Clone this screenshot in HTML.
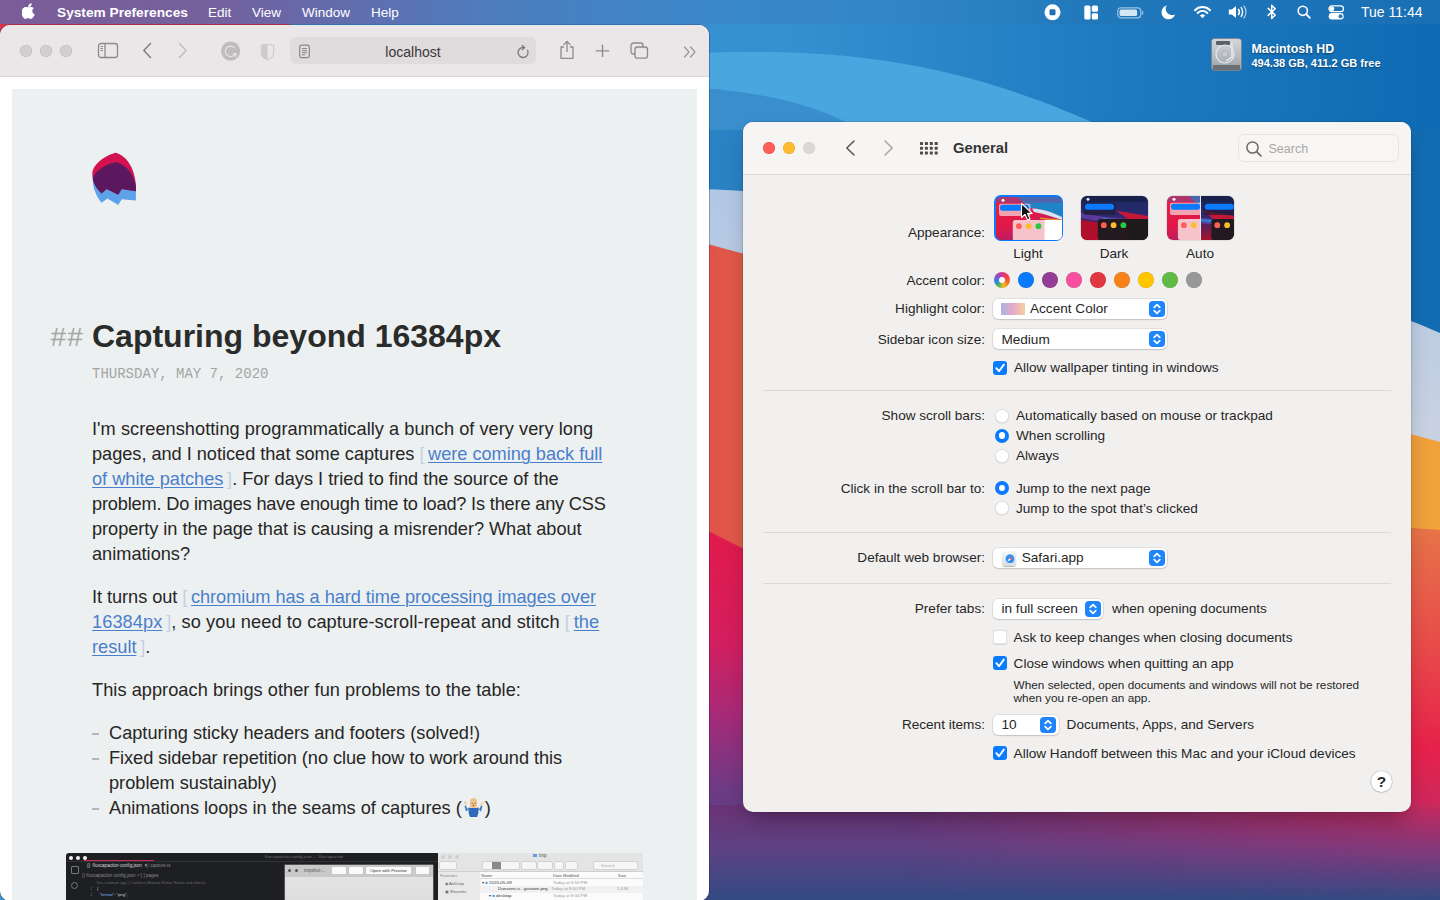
<!DOCTYPE html>
<html><head><meta charset="utf-8">
<style>
*{box-sizing:border-box;margin:0;padding:0}
html,body{width:1440px;height:900px;overflow:hidden;font-family:"Liberation Sans",sans-serif;}
body{position:relative;background:#2a82c4}
.abs{position:absolute}
#wall{position:absolute;left:0;top:0;width:1440px;height:900px}
/* menubar */
#menubar{position:absolute;left:0;top:0;width:1440px;height:24px;
 background:linear-gradient(90deg,#7b5d98 0%,#74619e 15%,#6868a8 21%,#4c7ebf 35%,#3a88c9 50%,#3186c7 62%,#2078bb 76%,#1a6fb5 100%);color:#fff}
#menubar .t{position:absolute;top:4.5px;font-size:13.5px;line-height:16px;white-space:nowrap}
/* safari */
#safari{position:absolute;left:0;top:25px;width:709px;height:876px;background:#fff;border-radius:10px;overflow:hidden;box-shadow:0 0 0 0.6px rgba(20,20,60,.45)}
#stb{position:absolute;left:0;top:0;width:709px;height:52px;background:#ebe6e8;border-bottom:1px solid #dcd7d9}
#page{position:absolute;left:12px;top:64px;width:685px;height:900px;background:#edf0f0}
.ptxt{position:absolute;left:92px;font-size:18.2px;line-height:25px;color:#262626;white-space:nowrap}
.lnk{color:#4a7fcc;text-decoration:underline;text-decoration-thickness:1.3px;text-underline-offset:1.6px}
.br{color:#c2d2e6}
/* prefs */
#prefs{position:absolute;left:743px;top:122px;width:668px;height:690px;background:#f2f0ef;border-radius:10px;
 box-shadow:0 0 0 0.5px rgba(0,0,0,.2),0 12px 22px -6px rgba(0,0,0,.3)}
#ptb{position:absolute;left:0;top:0;width:668px;height:53px;border-bottom:1px solid #dddbda;background:#f7f5f4;border-radius:10px 10px 0 0}
.lbl{position:absolute;font-size:13.6px;line-height:16px;color:#262626;white-space:nowrap;margin-top:1px}
.rl{text-align:right;width:300px;left:-57px}
.sep{position:absolute;left:20px;width:628px;height:1px;background:#dcdad9}
.chk{position:absolute;left:250px;width:14px;height:14px;border-radius:3px;background:#0a7aff}
.unchk{position:absolute;left:250px;width:14px;height:14px;border-radius:3px;background:#fff;box-shadow:inset 0 0 0 0.5px #c8c6c5,0 0.5px 1px rgba(0,0,0,.1)}
.radio{position:absolute;left:252px;width:14px;height:14px;border-radius:7px;background:#fff;box-shadow:inset 0 0 0 0.5px #c8c6c5,0 0.5px 1px rgba(0,0,0,.1)}
.radio.on{background:#0a7aff;box-shadow:none}
.radio.on::after{content:"";position:absolute;left:3.8px;top:3.8px;width:6.4px;height:6.4px;border-radius:3.2px;background:#fff}
.pop{position:absolute;left:250px;height:20px;border-radius:5px;background:#fff;box-shadow:0 0 0 0.5px rgba(0,0,0,.14),0 1px 1.5px rgba(0,0,0,.12)}
.step{position:absolute;top:2px;width:16px;height:16px;border-radius:4px;background:#1f85fb}
.acc{position:absolute;top:150px;width:16px;height:16px;border-radius:8px}
</style></head>
<body>
<div id="wall"><svg width="1440" height="900" viewBox="0 0 1440 900">
<defs>
<linearGradient id="wtop" x1="0" y1="0" x2="1" y2="0">
 <stop offset="0" stop-color="#3a94d0"/><stop offset="0.55" stop-color="#3490d0"/><stop offset="0.78" stop-color="#1e7ac0"/><stop offset="1" stop-color="#0e6ab2"/>
</linearGradient>
<linearGradient id="lav" x1="0" y1="0" x2="0" y2="1">
 <stop offset="0" stop-color="#b2c7e4"/><stop offset="0.5" stop-color="#d2d6e0"/><stop offset="1" stop-color="#dcdde6"/>
</linearGradient>
<linearGradient id="orgL" x1="0" y1="0" x2="1" y2="0">
 <stop offset="0" stop-color="#e05248"/><stop offset="0.1" stop-color="#e0604a"/><stop offset="1" stop-color="#f0a23a"/>
</linearGradient>
<linearGradient id="redR" x1="0" y1="0" x2="0" y2="1">
 <stop offset="0" stop-color="#e67648"/><stop offset="0.35" stop-color="#e8484a"/><stop offset="0.6" stop-color="#e6224a"/><stop offset="0.82" stop-color="#c02a66"/><stop offset="1" stop-color="#3d4a88"/>
</linearGradient>
<linearGradient id="redL" x1="0" y1="0" x2="0" y2="1">
 <stop offset="0" stop-color="#e21a4a"/><stop offset="0.3" stop-color="#d41e5e"/><stop offset="0.5" stop-color="#a82a78"/><stop offset="0.7" stop-color="#6e3a84"/><stop offset="1" stop-color="#384a84"/>
</linearGradient>
<linearGradient id="bot" x1="0" y1="0" x2="0" y2="1">
 <stop offset="0" stop-color="#6a3274"/><stop offset="0.45" stop-color="#5e4284"/><stop offset="1" stop-color="#334a82"/>
</linearGradient>
<radialGradient id="pinkglow" cx="1440" cy="805" r="200" gradientUnits="userSpaceOnUse">
 <stop offset="0" stop-color="#d82a58" stop-opacity="1"/><stop offset="0.5" stop-color="#b83068" stop-opacity="0.6"/><stop offset="1" stop-color="#8a3a78" stop-opacity="0"/>
</radialGradient>
</defs>
<rect width="1440" height="900" fill="url(#wtop)"/>
<path d="M700 53 C 850 48, 960 62, 1110 130 L 700 130 Z" fill="#4aa6de"/>
<path d="M700 88 C 760 92, 820 105, 860 130 L 700 130 Z" fill="#3a8ecc"/>
<path d="M700 130 L 1440 130 L 1440 900 L 700 900 Z" fill="#136cb2"/>
<path d="M700 130 L 760 130 L 760 200 L 700 200 Z" fill="#2a82c4"/>
<path d="M700 189 C 900 194, 1300 268, 1440 333 L 1440 900 L 700 900 Z" fill="url(#lav)"/>
<path d="M700 242 L 1440 442 L 1440 900 L 700 900 Z" fill="url(#orgL)"/>
<path d="M1300 520 L 1440 530 L 1440 900 L 1300 900 Z" fill="url(#redR)"/>
<path d="M700 527 L 760 557 L 760 900 L 700 900 Z" fill="url(#redL)"/>
<rect x="700" y="805" width="740" height="95" fill="url(#bot)"/>
<defs><linearGradient id="pv" x1="0" y1="0" x2="0" y2="1"><stop offset="0" stop-color="#c82a5c" stop-opacity="1"/><stop offset="0.5" stop-color="#a03272" stop-opacity="0.55"/><stop offset="1" stop-color="#7a3a7a" stop-opacity="0"/></linearGradient>
<linearGradient id="ph" x1="0" y1="0" x2="1" y2="0"><stop offset="0" stop-color="#fff" stop-opacity="0"/><stop offset="0.45" stop-color="#fff" stop-opacity="0.45"/><stop offset="1" stop-color="#fff" stop-opacity="1"/></linearGradient>
<mask id="pm" maskUnits="userSpaceOnUse" x="900" y="805" width="540" height="95"><rect x="900" y="805" width="540" height="95" fill="url(#ph)"/></mask></defs>
<rect x="900" y="805" width="540" height="95" fill="url(#pv)" mask="url(#pm)"/>
<rect x="0" y="0" width="290" height="40" fill="#d8344e"/>
<rect x="290" y="0" width="420" height="40" fill="#3a8ed0"/>
</svg></div>
<div id="menubar">
 <div class="t" style="left:57px;font-weight:bold;font-size:13.7px">System Preferences</div>
 <div class="t" style="left:208px">Edit</div>
 <div class="t" style="left:252px">View</div>
 <div class="t" style="left:302px">Window</div>
 <div class="t" style="left:371px">Help</div>
 <div class="t" style="left:1361px;font-size:14px;top:3.8px">Tue 11:44</div>
<svg class="abs" style="left:22.2px;top:3px" width="14" height="16" viewBox="0 0 15 17"><path d="M10.3 0.3 C10.4 1.5 9.9 2.6 9.2 3.4 C8.5 4.2 7.4 4.8 6.4 4.7 C6.3 3.6 6.8 2.5 7.5 1.7 C8.2 0.9 9.4 0.3 10.3 0.3 Z M13.7 12.2 C13.3 13.1 13.1 13.5 12.5 14.4 C11.7 15.6 10.7 17 9.4 17 C8.3 17 8 16.3 6.5 16.3 C5 16.3 4.7 17 3.5 17 C2.3 17 1.3 15.7 0.6 14.5 C-1.4 11.4 -0.6 7.2 1.1 5.6 C2 4.6 3.2 4.2 4.3 4.2 C5.4 4.2 6.1 4.8 7.1 4.8 C8 4.8 8.6 4.2 9.9 4.2 C10.9 4.2 11.9 4.7 12.7 5.6 C10.2 7 10.6 10.7 13.7 12.2 Z" fill="#fff"/></svg>
 <svg class="abs" style="left:1044px;top:4px" width="18" height="17" viewBox="0 0 18 17"><circle cx="8.5" cy="8.3" r="8" fill="#fff"/><rect x="5.5" y="5.3" width="6" height="6" rx="1.3" fill="#2070b4"/></svg>
 <svg class="abs" style="left:1084px;top:5px" width="15" height="15" viewBox="0 0 15 15"><rect x="0.3" y="0.5" width="6.2" height="14" rx="1.5" fill="#fff"/><rect x="7.8" y="0.5" width="6.2" height="6.2" rx="1.5" fill="#fff"/><rect x="7.8" y="8.2" width="6.2" height="6.2" rx="1.5" fill="#fff"/></svg>
 <svg class="abs" style="left:1117px;top:7px" width="28" height="12" viewBox="0 0 28 12"><rect x="0.8" y="0.8" width="23" height="10" rx="3" fill="none" stroke="rgba(255,255,255,.55)" stroke-width="1.2"/><rect x="2.6" y="2.6" width="17.5" height="6.5" rx="1.6" fill="rgba(255,255,255,.82)"/><path d="M25 4 L26.3 4.6 L26.3 7.2 L25 7.8 Z" fill="rgba(255,255,255,.55)"/></svg>
 <svg class="abs" style="left:1161px;top:5px" width="15" height="15" viewBox="0 0 15 15"><path d="M6.2 0.6 C3 1.2 0.6 4 0.6 7.4 C0.6 11.2 3.7 14.3 7.5 14.3 C10.6 14.3 13.2 12.3 14.1 9.5 C13.2 9.9 12.3 10.1 11.3 10.1 C7.6 10.1 4.7 7.1 4.7 3.5 C4.7 2.4 5.1 1.4 6.2 0.6 Z" fill="#fff"/></svg>
 <svg class="abs" style="left:1194px;top:5px" width="17" height="14" viewBox="0 0 17 14"><path d="M1 5.2 C5 1 12 1 16 5.2" fill="none" stroke="#fff" stroke-width="2" stroke-linecap="round"/><path d="M3.6 8 C6.5 5.2 10.5 5.2 13.4 8" fill="none" stroke="#fff" stroke-width="2" stroke-linecap="round"/><path d="M6.4 10.6 C7.6 9.4 9.4 9.4 10.6 10.6 L8.5 12.8 Z" fill="#fff" stroke="#fff" stroke-width="1" stroke-linejoin="round"/></svg>
 <svg class="abs" style="left:1228px;top:5px" width="20" height="14" viewBox="0 0 20 14"><path d="M0.8 4.5 L3.8 4.5 L8 1 L8 13 L3.8 9.5 L0.8 9.5 Z" fill="#fff"/><path d="M10.5 4.3 C11.5 5.8 11.5 8.2 10.5 9.7" fill="none" stroke="#fff" stroke-width="1.5" stroke-linecap="round"/><path d="M13.2 2.6 C15 5 15 9 13.2 11.4" fill="none" stroke="#fff" stroke-width="1.4" stroke-linecap="round"/><path d="M15.9 1 C18.6 4.5 18.6 9.5 15.9 13" fill="none" stroke="rgba(255,255,255,.6)" stroke-width="1.3" stroke-linecap="round"/></svg>
 <svg class="abs" style="left:1267px;top:4px" width="10" height="16" viewBox="0 0 10 16"><path d="M1.2 4.4 L8.2 11 L4.7 14.5 L4.7 1.2 L8.2 4.7 L1.2 11.4" fill="none" stroke="#fff" stroke-width="1.5" stroke-linejoin="round" stroke-linecap="round"/></svg>
 <svg class="abs" style="left:1297px;top:5px" width="14" height="14" viewBox="0 0 14 14"><circle cx="5.8" cy="5.8" r="4.6" fill="none" stroke="#fff" stroke-width="1.6"/><line x1="9.2" y1="9.2" x2="12.8" y2="12.8" stroke="#fff" stroke-width="1.8" stroke-linecap="round"/></svg>
 <svg class="abs" style="left:1328px;top:5px" width="17" height="15" viewBox="0 0 17 15"><rect x="1" y="0.8" width="14.5" height="5.8" rx="2.9" fill="none" stroke="#fff" stroke-width="1.3"/><circle cx="4" cy="3.7" r="2.3" fill="#fff"/><rect x="0.7" y="8" width="15" height="6.4" rx="3.2" fill="#fff"/><circle cx="12.5" cy="11.2" r="2" fill="#2a78bc"/></svg>

</div>

<div id="hd">
 <svg class="abs" style="left:1210px;top:37px" width="33" height="35" viewBox="0 0 33 35">
  <defs><linearGradient id="hdg" x1="0" y1="0" x2="0" y2="1"><stop offset="0" stop-color="#d4d8dc"/><stop offset="0.5" stop-color="#b8bec4"/><stop offset="1" stop-color="#9aa0a6"/></linearGradient></defs>
  <rect x="1.5" y="1.5" width="30" height="32" rx="3" fill="url(#hdg)" stroke="#7c8288" stroke-width="0.8"/>
  <rect x="6" y="4" width="14" height="4" rx="1" fill="#5a6066"/>
  <circle cx="15" cy="17" r="9" fill="none" stroke="#e6e9ec" stroke-width="1.2"/>
  <circle cx="15" cy="17" r="3" fill="#c8ccd0" stroke="#9aa0a6" stroke-width="0.6"/>
  <path d="M22 6 L22 20 L16 24" fill="none" stroke="#eef0f2" stroke-width="1.2"/>
  <rect x="3" y="28" width="27" height="5" fill="#6a7076"/>
 </svg>
 <div class="abs" style="left:1251.5px;top:41.5px;color:#fff;font-weight:bold;font-size:12.4px;line-height:15px;white-space:nowrap;text-shadow:0 1px 2px rgba(0,0,0,.45)">Macintosh HD</div>
 <div class="abs" style="left:1251.5px;top:56.8px;color:#fff;font-weight:bold;font-size:11px;line-height:13px;white-space:nowrap;text-shadow:0 1px 2px rgba(0,0,0,.45)">494.38 GB, 411.2 GB free</div>
</div>

<div id="safari">
 <div id="stb">
  <div class="abs" style="left:20px;top:20px;width:12px;height:12px;border-radius:6px;background:#d3cfd0;box-shadow:inset 0 0 0 0.6px #c0bcbd"></div>
  <div class="abs" style="left:40px;top:20px;width:12px;height:12px;border-radius:6px;background:#d3cfd0;box-shadow:inset 0 0 0 0.6px #c0bcbd"></div>
  <div class="abs" style="left:60px;top:20px;width:12px;height:12px;border-radius:6px;background:#d3cfd0;box-shadow:inset 0 0 0 0.6px #c0bcbd"></div>
  <svg class="abs" style="left:97px;top:17px" width="22" height="17" viewBox="0 0 22 17"><rect x="1.5" y="1.5" width="19" height="14" rx="2.5" fill="none" stroke="#8e8a8c" stroke-width="1.3"/><line x1="8" y1="1.5" x2="8" y2="15.5" stroke="#8e8a8c" stroke-width="1.3"/><line x1="3.5" y1="4.5" x2="6" y2="4.5" stroke="#8e8a8c" stroke-width="1"/><line x1="3.5" y1="6.5" x2="6" y2="6.5" stroke="#8e8a8c" stroke-width="1"/><line x1="3.5" y1="8.5" x2="6" y2="8.5" stroke="#8e8a8c" stroke-width="1"/></svg>
  <svg class="abs" style="left:141px;top:17px" width="12" height="17" viewBox="0 0 12 17"><path d="M9.5 1.5 L2.8 8.5 L9.5 15.5" fill="none" stroke="#7f7b7d" stroke-width="1.5" stroke-linecap="round" stroke-linejoin="round"/></svg>
  <svg class="abs" style="left:177px;top:17px" width="12" height="17" viewBox="0 0 12 17"><path d="M2.5 1.5 L9.2 8.5 L2.5 15.5" fill="none" stroke="#c2bec0" stroke-width="1.5" stroke-linecap="round" stroke-linejoin="round"/></svg>
  <svg class="abs" style="left:220px;top:16px" width="22" height="22" viewBox="0 0 22 22"><circle cx="10.6" cy="10.1" r="9.6" fill="#bfbcbd"/><path d="M14.2 6.6 A5.2 5.2 0 1 0 15.4 12.2" fill="none" stroke="#ebe7e8" stroke-width="1.1" stroke-linecap="round"/><path d="M13.2 12.6 L16.2 12.9 L15.6 15.6" fill="none" stroke="#ebe7e8" stroke-width="1.1" stroke-linecap="round" stroke-linejoin="round"/></svg>
  <svg class="abs" style="left:259px;top:16.5px" width="17" height="20" viewBox="0 0 17 20"><path d="M2.3 3.2 C5 2 12 2 14.7 3.2 L14.7 11 C14.7 14.5 11.5 16.8 8.5 17.8 C5.5 16.8 2.3 14.5 2.3 11 Z" fill="none" stroke="#cfcbcd" stroke-width="1.2" stroke-linejoin="round"/><path d="M8.5 2.4 C6 2.4 3.8 2.7 2.3 3.2 L2.3 11 C2.3 14.5 5.5 16.8 8.5 17.8 Z" fill="#cfcbcd"/></svg>
  <div class="abs" style="left:290px;top:12px;width:246px;height:27px;border-radius:6px;background:#e0dbdd"></div>
  <svg class="abs" style="left:298px;top:19px" width="13" height="15" viewBox="0 0 13 15"><rect x="1.7" y="1.2" width="9.6" height="12.4" rx="1.8" fill="none" stroke="#8a8688" stroke-width="1.2"/><line x1="4" y1="4.5" x2="9" y2="4.5" stroke="#8a8688" stroke-width="1"/><line x1="4" y1="6.6" x2="9" y2="6.6" stroke="#8a8688" stroke-width="1"/><line x1="4" y1="8.7" x2="9" y2="8.7" stroke="#8a8688" stroke-width="1"/><line x1="4" y1="10.8" x2="7" y2="10.8" stroke="#8a8688" stroke-width="1"/></svg>
  <div class="abs" style="left:290px;top:19px;width:246px;text-align:center;font-size:14px;line-height:17px;color:#3a3839">localhost</div>
  <svg class="abs" style="left:516px;top:20px" width="15" height="15" viewBox="0 0 15 15"><path d="M11.6 5.3 A5 5 0 1 1 7.5 2.5" fill="none" stroke="#7b7779" stroke-width="1.3" stroke-linecap="round"/><path d="M6.2 0.6 L8.6 2.5 L6.4 4.5" fill="none" stroke="#7b7779" stroke-width="1.3" stroke-linecap="round" stroke-linejoin="round"/></svg>
  <svg class="abs" style="left:558px;top:15px" width="18" height="20" viewBox="0 0 18 20"><path d="M6 7 L3 7 L3 18.3 L15 18.3 L15 7 L12 7" fill="none" stroke="#8e8a8c" stroke-width="1.3" stroke-linejoin="round"/><line x1="9" y1="1.5" x2="9" y2="12" stroke="#8e8a8c" stroke-width="1.3"/><path d="M5.8 4.6 L9 1.4 L12.2 4.6" fill="none" stroke="#8e8a8c" stroke-width="1.3" stroke-linecap="round" stroke-linejoin="round"/></svg>
  <svg class="abs" style="left:594px;top:19px" width="17" height="14" viewBox="0 0 17 14"><line x1="8.5" y1="0.7" x2="8.5" y2="13" stroke="#8e8a8c" stroke-width="1.4"/><line x1="1.8" y1="6.9" x2="15.2" y2="6.9" stroke="#8e8a8c" stroke-width="1.4"/></svg>
  <svg class="abs" style="left:630px;top:17px" width="19" height="17" viewBox="0 0 19 17"><rect x="1" y="1" width="12" height="11" rx="2.5" fill="none" stroke="#8e8a8c" stroke-width="1.3"/><rect x="5" y="5" width="12.5" height="11.2" rx="2.5" fill="#ebe6e8" stroke="#8e8a8c" stroke-width="1.3"/></svg>
  <svg class="abs" style="left:683px;top:21px" width="15" height="12" viewBox="0 0 15 12"><path d="M1.5 1 L6 6 L1.5 11 M7.5 1 L12 6 L7.5 11" fill="none" stroke="#9a9698" stroke-width="1.3" stroke-linecap="round" stroke-linejoin="round"/></svg>
 </div>
 <div id="page">
 </div>
</div>

<div id="article">
<svg class="abs" style="left:88px;top:148px" width="54" height="62" viewBox="88 148 54 62">
<path d="M92.5 176 C92 166 104 156 115.7 152.8 C126 156 134 166 135.9 185 L135.9 200.6 L121.8 199.2 L118.2 205 L107.4 198.4 L101.6 202.8 C96 196 92.5 188 92.5 176 Z" fill="#5fa2ec"/>
<path d="M92.5 174 C92 165 104 156 115.7 152.8 C126 156 134 166 135.9 185 L135.9 191.2 L121.8 189 L118.2 194.8 L106.7 189 L101.6 193.4 C96 188 92.5 182 92.5 174 Z" fill="#d51250"/>
<path d="M93 178 C96 170 106 164 116 162.3 C127 165 134 175 135.9 187 L135.9 191.2 L121.8 189 L118.2 194.8 L106.7 189 L101.6 193.4 C96 188 93 183 93 178 Z" fill="#5c185e"/>
</svg>
<div class="abs" style="left:50px;top:324px;font-family:'Liberation Mono',monospace;font-size:28px;line-height:30px;color:#a5a7a7;white-space:nowrap">##</div>
<div class="abs" style="left:92px;top:318px;font-size:32px;font-weight:bold;line-height:37px;color:#2a2b2b;white-space:nowrap">Capturing beyond 16384px</div>
<div class="abs" style="left:92px;top:366px;font-family:'Liberation Mono',monospace;font-size:14px;line-height:17px;color:#a3a5a5;white-space:nowrap">THURSDAY, MAY 7, 2020</div>
<div class="ptxt" style="letter-spacing:0.04px;top:417.2px;left:92px;">I'm screenshotting programmatically a bunch of very very long</div>
<div class="ptxt" style="letter-spacing:-0.03px;top:442.2px;left:92px;">pages, and I noticed that some captures <span class="br">[</span>&#8201;<span class="lnk">were coming back full</span></div>
<div class="ptxt" style="top:467.2px;left:92px;"><span class="lnk">of white patches</span>&#8201;<span class="br">]</span>. For days I tried to find the source of the</div>
<div class="ptxt" style="letter-spacing:-0.18px;top:492.2px;left:92px;">problem. Do images have enough time to load? Is there any CSS</div>
<div class="ptxt" style="letter-spacing:-0.047px;top:517.2px;left:92px;">property in the page that is causing a misrender? What about</div>
<div class="ptxt" style="top:542.2px;left:92px;">animations?</div>
<div class="ptxt" style="letter-spacing:-0.05px;top:585.2px;left:92px;">It turns out <span class="br">[</span>&#8201;<span class="lnk">chromium has a hard time processing images over</span></div>
<div class="ptxt" style="letter-spacing:0.086px;top:610.2px;left:92px;"><span class="lnk">16384px</span>&#8201;<span class="br">]</span>, so you need to capture-scroll-repeat and stitch <span class="br">[</span>&#8201;<span class="lnk">the</span></div>
<div class="ptxt" style="top:635.2px;left:92px;"><span class="lnk">result</span>&#8201;<span class="br">]</span>.</div>
<div class="ptxt" style="letter-spacing:0.043px;top:678.2px;left:92px;">This approach brings other fun problems to the table:</div>
<div class="ptxt" style="top:721.2px;left:109px;">Capturing sticky headers and footers (solved!)</div>
<div class="abs" style="left:92px;top:733.3px;width:6.5px;height:1.5px;background:#b4b6b6"></div>
<div class="ptxt" style="letter-spacing:-0.05px;top:746.2px;left:109px;">Fixed sidebar repetition (no clue how to work around this</div>
<div class="abs" style="left:92px;top:758.3px;width:6.5px;height:1.5px;background:#b4b6b6"></div>
<div class="ptxt" style="top:771.2px;left:109px;">problem sustainably)</div>
<div class="ptxt" style="top:796.2px;left:109px;">Animations loops in the seams of captures (<svg style="vertical-align:-3px;margin:0 1px" width="21" height="19" viewBox="0 0 21 19"><path d="M6 10 C5 12 5.5 16 7 19 L14 19 C15.5 16 16 12 15 10 Z" fill="#2f6bb8"/><path d="M6.5 10.5 L3 13.5 L1.5 8 L3 7.5 L4.2 11 L6.5 9 Z" fill="#3a78c4"/><path d="M14.5 10.5 L18 13.5 L19.5 8 L18 7.5 L16.8 11 L14.5 9 Z" fill="#3a78c4"/><path d="M0.5 3.5 L3 7.5 L4 6.8 L2 3 Z" fill="#f2c890"/><path d="M20.5 4.5 L18 8 L17 7.3 L19 4 Z" fill="#f2c890"/><rect x="7" y="1" width="7" height="9" rx="2.5" fill="#f0c48a"/><path d="M7 3.5 C7 0.5 14 0.5 14 3.5 L14 2 C13 -0.5 8 -0.5 7 2 Z" fill="#e8c070"/><circle cx="10.5" cy="7.5" r="0.8" fill="#c0303a"/><rect x="8.6" y="4.8" width="1" height="1" fill="#6a4a4a"/><rect x="11.6" y="4.8" width="1" height="1" fill="#6a4a4a"/></svg>)</div>
<div class="abs" style="left:92px;top:808.3px;width:6.5px;height:1.5px;background:#b4b6b6"></div>
<div class="abs" style="left:66px;top:852.6px;width:577px;height:50px;overflow:hidden">
 <div class="abs" style="left:0;top:0;width:372px;height:50px;background:#1e1f22;border-radius:3px 0 0 0"></div>
 <div class="abs" style="left:3px;top:3px;width:4px;height:4px;border-radius:2px;background:#f4f4f4"></div>
 <div class="abs" style="left:10px;top:3px;width:4px;height:4px;border-radius:2px;background:#f4f4f4"></div>
 <div class="abs" style="left:17px;top:3px;width:4px;height:4px;border-radius:2px;background:#f4f4f4"></div>
 <div class="abs" style="left:18px;top:7.4px;width:70px;height:1px;background:#c8305a"></div>
 <div class="abs" style="left:0;top:8.4px;width:372px;height:0.6px;background:#333"></div>
 <div class="abs" style="left:88px;top:0px;width:300px;text-align:center;font-size:4.4px;line-height:7px;color:#6e6e70;white-space:nowrap">fluxcapacitor-config.json — fluxcapacitor</div>
 <div class="abs" style="left:21px;top:9.5px;font-size:4.6px;line-height:8px;color:#d8d8d8;white-space:nowrap">{} &nbsp;fluxcapacitor-config.json &nbsp;×</div>
 <div class="abs" style="left:80px;top:9.5px;font-size:4.6px;line-height:8px;color:#8a8a8a;white-space:nowrap">▯ capture.ts</div>
 <div class="abs" style="left:5px;top:13px;width:8px;height:8px;border:1px solid #777;border-radius:1px"></div>
 <div class="abs" style="left:5px;top:29px;width:7px;height:7px;border:1px solid #777;border-radius:4px"></div>
 <div class="abs" style="left:16px;top:19.5px;font-size:4.6px;line-height:7px;color:#8a8a8a;white-space:nowrap">{} fluxcapacitor-config.json &gt; [ ] pages</div>
 <div class="abs" style="left:30px;top:27px;font-size:3.8px;line-height:6px;color:#6a6a6a;white-space:nowrap">You, a minute ago | 2 authors (Manuel Muñoz Solera and others)</div>
 <div class="abs" style="left:24px;top:33px;font-size:4.2px;line-height:6px;color:#666;white-space:nowrap">1 &nbsp;&nbsp;&nbsp;<span style="color:#d0d0d0">{</span></div>
 <div class="abs" style="left:24px;top:39.5px;font-size:4.2px;line-height:6px;color:#666;white-space:nowrap">2 &nbsp;&nbsp;&nbsp;&nbsp;&nbsp;<span style="color:#7ab0ee">"format"</span><span style="color:#d0d0d0">: "png",</span></div>
 <div class="abs" style="left:219px;top:12.4px;width:148px;height:40px;background:linear-gradient(180deg,#e6e6e6,#dcdcdc);box-shadow:0 0 0 0.5px #888"></div>
 <div class="abs" style="left:219px;top:12.4px;width:148px;height:12px;background:#c9c9c9"></div>
 <div class="abs" style="left:222px;top:16px;width:3px;height:3px;border-radius:2px;background:#555"></div>
 <div class="abs" style="left:229px;top:16px;width:3px;height:3px;border-radius:2px;background:#555"></div>
 <div class="abs" style="left:238px;top:14.4px;font-size:4.5px;line-height:7px;color:#555;white-space:nowrap">tmpshot-...</div>
 <div class="abs" style="left:266px;top:14.4px;width:14px;height:7px;background:#fafafa;border-radius:1px"></div>
 <div class="abs" style="left:283px;top:14.4px;width:14px;height:7px;background:#fafafa;border-radius:1px"></div>
 <div class="abs" style="left:300px;top:14.4px;width:45px;height:7px;background:#fafafa;border-radius:1px;font-size:4.4px;line-height:7px;text-align:center;color:#333;white-space:nowrap">Open with Preview</div>
 <div class="abs" style="left:350px;top:14.4px;width:13px;height:7px;background:#fafafa;border-radius:1px"></div>
 <div class="abs" style="left:372px;top:0;width:205px;height:50px;background:#fbfbfb"></div>
 <div class="abs" style="left:372px;top:0;width:205px;height:19.5px;background:#e4e4e4;border-bottom:0.5px solid #cfcfcf"></div>
 <div class="abs" style="left:372px;top:19.5px;width:42px;height:31px;background:#e9e9e9"></div>
 <div class="abs" style="left:375px;top:2.6px;width:4px;height:4px;border-radius:2px;background:#cfcfcf"></div>
 <div class="abs" style="left:382px;top:2.6px;width:4px;height:4px;border-radius:2px;background:#cfcfcf"></div>
 <div class="abs" style="left:389px;top:2.6px;width:4px;height:4px;border-radius:2px;background:#cfcfcf"></div>
 <div class="abs" style="left:467px;top:1.6px;width:4px;height:3px;background:#5aa0e8"></div>
 <div class="abs" style="left:473px;top:0.4px;font-size:4.6px;line-height:6px;color:#555">tmp</div>
 <div class="abs" style="left:374px;top:9.5px;width:16px;height:7px;background:#f6f6f6;border-radius:1px;box-shadow:0 0 0 0.4px #bbb"></div>
 <div class="abs" style="left:417px;top:9.5px;width:36px;height:7px;background:#f6f6f6;border-radius:1px;box-shadow:0 0 0 0.4px #bbb"></div>
 <div class="abs" style="left:426px;top:9.5px;width:9px;height:7px;background:#8a8a8a"></div>
 <div class="abs" style="left:456px;top:9.5px;width:14px;height:7px;background:#f6f6f6;border-radius:1px;box-shadow:0 0 0 0.4px #bbb"></div>
 <div class="abs" style="left:472px;top:9.5px;width:14px;height:7px;background:#f6f6f6;border-radius:1px;box-shadow:0 0 0 0.4px #bbb"></div>
 <div class="abs" style="left:489px;top:9.5px;width:8px;height:7px;background:#f6f6f6;border-radius:1px;box-shadow:0 0 0 0.4px #bbb"></div>
 <div class="abs" style="left:500px;top:9.5px;width:11px;height:7px;background:#f6f6f6;border-radius:1px;box-shadow:0 0 0 0.4px #bbb"></div>
 <div class="abs" style="left:528px;top:9.5px;width:43px;height:7px;background:#f6f6f6;border-radius:1px;box-shadow:0 0 0 0.4px #bbb;font-size:4.4px;line-height:7px;color:#aaa;padding-left:7px">Search</div>
 <div class="abs" style="left:374px;top:20.5px;font-size:4.2px;line-height:6px;color:#888">Favorites</div>
 <div class="abs" style="left:379px;top:28px;font-size:4.4px;line-height:6px;color:#666">◉ AirDrop</div>
 <div class="abs" style="left:379px;top:36.5px;font-size:4.4px;line-height:6px;color:#666">▣ Recents</div>
 <div class="abs" style="left:414px;top:19.5px;width:163px;height:7px;border-bottom:0.5px solid #ddd;font-size:4.2px;line-height:7px;color:#555;white-space:nowrap">&nbsp;Name<span style="position:absolute;left:73px">Date Modified</span><span style="position:absolute;left:138px">Size</span></div>
 <div class="abs" style="left:416px;top:27px;font-size:4.4px;line-height:6.5px;color:#333;white-space:nowrap">▾ <span style="color:#5aa0e8">■</span> 2020-05-09<span style="position:absolute;left:71px;color:#999">Today at 9:56 PM</span></div>
 <div class="abs" style="left:414px;top:33.5px;width:163px;height:6.5px;background:#f1f1f1"></div>
 <div class="abs" style="left:432px;top:33.5px;font-size:4.4px;line-height:6.5px;color:#333;white-space:nowrap">Dunseen-is...gination.png<span style="position:absolute;left:53px;color:#999">Today at 9:50 PM</span><span style="position:absolute;left:119px;color:#999">2.4 M</span></div>
 <div class="abs" style="left:423px;top:40px;font-size:4.4px;line-height:6.5px;color:#333;white-space:nowrap">▾ <span style="color:#5aa0e8">■</span> desktop<span style="position:absolute;left:64px;color:#999">Today at 9:34 PM</span></div>
</div>
</div>

<div id="prefs">
 <div id="ptb">
<div class="abs" style="left:20.3px;top:20.2px;width:12px;height:12px;border-radius:6px;background:#fe5f57;box-shadow:inset 0 0 0 0.5px rgba(200,40,40,.5)"></div>
<div class="abs" style="left:40.3px;top:20.2px;width:12px;height:12px;border-radius:6px;background:#fdbc2e;box-shadow:inset 0 0 0 0.5px rgba(200,140,20,.5)"></div>
<div class="abs" style="left:60.2px;top:20.2px;width:12px;height:12px;border-radius:6px;background:#dbd9d8;box-shadow:inset 0 0 0 0.5px rgba(0,0,0,.08)"></div>
<svg class="abs" style="left:101px;top:17px" width="13" height="18" viewBox="0 0 13 18"><path d="M10 2 L2.8 9 L10 16" fill="none" stroke="#5a5857" stroke-width="1.6" stroke-linecap="round" stroke-linejoin="round"/></svg>
<svg class="abs" style="left:139px;top:17px" width="13" height="18" viewBox="0 0 13 18"><path d="M3 2 L10.2 9 L3 16" fill="none" stroke="#a9a7a6" stroke-width="1.6" stroke-linecap="round" stroke-linejoin="round"/></svg>
<svg class="abs" style="left:176.7px;top:19.5px" width="18" height="13" viewBox="0 0 18 13"><rect x="0.0" y="0.00" width="3" height="3" rx="0.6" fill="#4d4b4a"/><rect x="4.9" y="0.00" width="3" height="3" rx="0.6" fill="#4d4b4a"/><rect x="9.8" y="0.00" width="3" height="3" rx="0.6" fill="#4d4b4a"/><rect x="14.7" y="0.00" width="3" height="3" rx="0.6" fill="#4d4b4a"/><rect x="0.0" y="4.75" width="3" height="3" rx="0.6" fill="#4d4b4a"/><rect x="4.9" y="4.75" width="3" height="3" rx="0.6" fill="#4d4b4a"/><rect x="9.8" y="4.75" width="3" height="3" rx="0.6" fill="#4d4b4a"/><rect x="14.7" y="4.75" width="3" height="3" rx="0.6" fill="#4d4b4a"/><rect x="0.0" y="9.50" width="3" height="3" rx="0.6" fill="#4d4b4a"/><rect x="4.9" y="9.50" width="3" height="3" rx="0.6" fill="#4d4b4a"/><rect x="9.8" y="9.50" width="3" height="3" rx="0.6" fill="#4d4b4a"/><rect x="14.7" y="9.50" width="3" height="3" rx="0.6" fill="#4d4b4a"/></svg>
<div class="lbl" style="left:210px;top:17.2px;font-size:14.8px;line-height:17px;font-weight:bold;color:#353433">General</div>
<div class="abs" style="left:494.5px;top:12.25px;width:161px;height:27.5px;border-radius:6px;background:#f8f6f5;box-shadow:inset 0 0 0 1px #e7e4e4"></div>
<svg class="abs" style="left:502px;top:18px" width="18" height="18" viewBox="0 0 18 18"><circle cx="7.5" cy="7.5" r="5.6" fill="none" stroke="#6c6a69" stroke-width="1.5"/><line x1="11.6" y1="11.6" x2="16" y2="16" stroke="#6c6a69" stroke-width="1.7" stroke-linecap="round"/></svg>
<div class="lbl" style="left:525.5px;top:19.42px;font-size:12.5px;line-height:15px;color:#a9a7a6;">Search</div>
</div>
<div class="lbl" style="right:426px;text-align:right;top:102.29px">Appearance:</div>
<div class="abs" style="left:250.5px;top:72.8px;width:69.5px;height:46.6px;border-radius:7px;background:#0a7aff"></div>
<div class="abs" style="left:252.5px;top:74.5px;width:66.6px;height:43.4px;border-radius:5px;overflow:hidden"><svg class="abs" style="left:0px;top:0px" width="67" height="44" viewBox="0 0 67 44"><defs><linearGradient id="lgl1" x1="0" y1="0" x2="0.6" y2="1"><stop offset="0" stop-color="#e8203e"/><stop offset="0.55" stop-color="#e01848"/><stop offset="1" stop-color="#9a2478"/></linearGradient></defs><rect width="67" height="44" fill="url(#lgl1)"/><path d="M22 0 L67 0 L67 21 C58 16 48 12 34 11 C30 8 26 4 22 0 Z" fill="#1e84c6"/><path d="M36 11.5 C48 12 58 16 67 20.5 L67 23.5 C58 20 48 17 38 15 Z" fill="#d8e2f0"/><path d="M44 20.5 L67 22.5 L67 24 L44 22 Z" fill="#e8902a"/><rect width="67" height="6" fill="#7a4a9a" opacity="0.5"/><circle cx="7" cy="3.2" r="1.5" fill="#fff"/><rect x="3" y="6.7" width="31.5" height="12.2" rx="2" fill="#f2b4bc" opacity="0.9"/><rect x="4" y="7.8" width="29" height="6" rx="2.5" fill="#0a7aff"/><rect x="16.8" y="23" width="50.2" height="21" rx="2.5" fill="#f7c3cb"/><rect x="48.6" y="23" width="18.4" height="21" fill="#ffffff"/><circle cx="22.8" cy="29.2" r="2.9" fill="#fe5f57"/><circle cx="32.6" cy="29.2" r="2.9" fill="#fdbc2e"/><circle cx="42.4" cy="29.2" r="2.9" fill="#28c840"/></svg></div>
<div class="abs" style="left:337.7px;top:74.3px;width:67px;height:43.5px;border-radius:6px;overflow:hidden;box-shadow:0 0 0 0.5px rgba(0,0,0,.15)"><svg class="abs" style="left:0px;top:0px" width="67" height="44" viewBox="0 0 67 44"><defs><linearGradient id="dgd1" x1="0" y1="0" x2="0" y2="1"><stop offset="0" stop-color="#1c2a5e"/><stop offset="0.45" stop-color="#2a2a70"/><stop offset="1" stop-color="#a8102e"/></linearGradient></defs><rect width="67" height="44" fill="url(#dgd1)"/><path d="M0 17 C15 20 30 22 50 23 L67 24 L67 28 L40 28 C25 26 10 24 0 22 Z" fill="#5a3a9a"/><path d="M22 22 C32 23 42 23.5 52 25 L52 27 C42 26 32 25 22 24 Z" fill="#2a80d0"/><path d="M35 14.5 L67 20 L67 27 L48 24 Z" fill="#c41838"/><path d="M0 24 C10 26 20 27 30 28 L30 44 L0 44 Z" fill="#b0102c"/><rect width="67" height="6" fill="#0e1430" opacity="0.4"/><circle cx="7" cy="3.2" r="1.5" fill="#fff" opacity="0.9"/><rect x="3" y="6.7" width="31.5" height="12.2" rx="2" fill="#241a30" opacity="0.7"/><rect x="4" y="7.8" width="29" height="6" rx="2.5" fill="#0a7aff"/><rect x="16.8" y="23" width="50.2" height="21" rx="2.5" fill="#221a1e"/><rect x="48.6" y="23" width="18.4" height="21" fill="#1e1a1c"/><circle cx="22.8" cy="29.2" r="2.9" fill="#fe5f57"/><circle cx="32.6" cy="29.2" r="2.9" fill="#fdbc2e"/><circle cx="42.4" cy="29.2" r="2.9" fill="#28c840"/></svg></div>
<div class="abs" style="left:424.2px;top:74.3px;width:66.5px;height:43.5px;border-radius:6px;overflow:hidden;box-shadow:0 0 0 0.5px rgba(0,0,0,.15)"><div class="abs" style="left:0;top:0;width:33.3px;height:44px;overflow:hidden"><svg class="abs" style="left:0px;top:0px" width="67" height="44" viewBox="0 0 67 44"><defs><linearGradient id="lgl2" x1="0" y1="0" x2="0.6" y2="1"><stop offset="0" stop-color="#e8203e"/><stop offset="0.55" stop-color="#e01848"/><stop offset="1" stop-color="#9a2478"/></linearGradient></defs><rect width="67" height="44" fill="url(#lgl2)"/><path d="M22 0 L67 0 L67 21 C58 16 48 12 34 11 C30 8 26 4 22 0 Z" fill="#1e84c6"/><path d="M36 11.5 C48 12 58 16 67 20.5 L67 23.5 C58 20 48 17 38 15 Z" fill="#d8e2f0"/><path d="M44 20.5 L67 22.5 L67 24 L44 22 Z" fill="#e8902a"/><rect width="67" height="6" fill="#7a4a9a" opacity="0.5"/><circle cx="7" cy="3.2" r="1.5" fill="#fff"/><rect x="3" y="6.7" width="31.5" height="12.2" rx="2" fill="#f2b4bc" opacity="0.9"/><rect x="4" y="7.8" width="29" height="6" rx="2.5" fill="#0a7aff"/><rect x="10.9" y="23" width="50.2" height="21" rx="2.5" fill="#f7c3cb"/><rect x="42.7" y="23" width="18.4" height="21" fill="#ffffff"/><circle cx="16.9" cy="29.2" r="2.9" fill="#fe5f57"/><circle cx="26.700000000000003" cy="29.2" r="2.9" fill="#fdbc2e"/><circle cx="36.5" cy="29.2" r="2.9" fill="#28c840"/></svg></div><div class="abs" style="left:33.3px;top:0;width:34px;height:44px;overflow:hidden;border-left:1px solid #e8e8ee"><svg class="abs" style="left:-34.3px;top:0px" width="67" height="44" viewBox="0 0 67 44"><defs><linearGradient id="dgd2" x1="0" y1="0" x2="0" y2="1"><stop offset="0" stop-color="#1c2a5e"/><stop offset="0.45" stop-color="#2a2a70"/><stop offset="1" stop-color="#a8102e"/></linearGradient></defs><rect width="67" height="44" fill="url(#dgd2)"/><path d="M0 17 C15 20 30 22 50 23 L67 24 L67 28 L40 28 C25 26 10 24 0 22 Z" fill="#5a3a9a"/><path d="M22 22 C32 23 42 23.5 52 25 L52 27 C42 26 32 25 22 24 Z" fill="#2a80d0"/><path d="M35 14.5 L67 20 L67 27 L48 24 Z" fill="#c41838"/><path d="M0 24 C10 26 20 27 30 28 L30 44 L0 44 Z" fill="#b0102c"/><rect width="67" height="6" fill="#0e1430" opacity="0.4"/><circle cx="7" cy="3.2" r="1.5" fill="#fff" opacity="0.9"/><rect x="36.8" y="6.7" width="31.5" height="12.2" rx="2" fill="#241a30" opacity="0.7"/><rect x="37.8" y="7.8" width="29" height="6" rx="2.5" fill="#0a7aff"/><rect x="44.3" y="23" width="50.2" height="21" rx="2.5" fill="#221a1e"/><rect x="76.1" y="23" width="18.4" height="21" fill="#1e1a1c"/><circle cx="50.3" cy="29.2" r="2.9" fill="#fe5f57"/><circle cx="60.1" cy="29.2" r="2.9" fill="#fdbc2e"/><circle cx="69.9" cy="29.2" r="2.9" fill="#28c840"/></svg></div></div>
<svg class="abs" style="left:277px;top:80px" width="14" height="20" viewBox="0 0 14 20"><path d="M1.5 1.5 L1.5 15.5 L5 12.3 L7.6 18 L10 17 L7.5 11.4 L12.2 11.4 Z" fill="#111" stroke="#fff" stroke-width="1.1" stroke-linejoin="round"/></svg>
<div class="lbl" style="left:235px;width:100px;text-align:center;top:123.3px">Light</div>
<div class="lbl" style="left:321px;width:100px;text-align:center;top:123.3px">Dark</div>
<div class="lbl" style="left:407px;width:100px;text-align:center;top:123.3px">Auto</div>
<div class="lbl" style="right:426px;text-align:right;top:149.69px">Accent color:</div>
<div class="abs" style="left:251.2px;top:150.3px;width:16px;height:16px;border-radius:8px;background:conic-gradient(#d8388c 0deg,#f0404a 60deg,#f07a28 120deg,#f8be20 165deg,#5cb848 205deg,#2a8ae8 255deg,#8a50c8 310deg,#d8388c 360deg)"><div class="abs" style="left:5px;top:5px;width:6px;height:6px;border-radius:3px;background:#fff"></div></div>
<div class="abs" style="left:274.8px;top:150.3px;width:16px;height:16px;border-radius:8px;background:#0a7aff;box-shadow:inset 0 0 0 0.5px rgba(0,0,0,.12)"></div>
<div class="abs" style="left:299px;top:150.3px;width:16px;height:16px;border-radius:8px;background:#953d96;box-shadow:inset 0 0 0 0.5px rgba(0,0,0,.12)"></div>
<div class="abs" style="left:322.9px;top:150.3px;width:16px;height:16px;border-radius:8px;background:#f74f9e;box-shadow:inset 0 0 0 0.5px rgba(0,0,0,.12)"></div>
<div class="abs" style="left:347px;top:150.3px;width:16px;height:16px;border-radius:8px;background:#e0383e;box-shadow:inset 0 0 0 0.5px rgba(0,0,0,.12)"></div>
<div class="abs" style="left:371.2px;top:150.3px;width:16px;height:16px;border-radius:8px;background:#f7821b;box-shadow:inset 0 0 0 0.5px rgba(0,0,0,.12)"></div>
<div class="abs" style="left:394.8px;top:150.3px;width:16px;height:16px;border-radius:8px;background:#ffc600;box-shadow:inset 0 0 0 0.5px rgba(0,0,0,.12)"></div>
<div class="abs" style="left:419px;top:150.3px;width:16px;height:16px;border-radius:8px;background:#62ba46;box-shadow:inset 0 0 0 0.5px rgba(0,0,0,.12)"></div>
<div class="abs" style="left:442.9px;top:150.3px;width:16px;height:16px;border-radius:8px;background:#989898;box-shadow:inset 0 0 0 0.5px rgba(0,0,0,.12)"></div>
<div class="lbl" style="right:426px;text-align:right;top:178.09px">Highlight color:</div>
<div class="pop" style="top:176.9px;width:174.2px"><div class="step" style="left:156px"><svg width="16" height="16" viewBox="0 0 16 16"><path d="M5.2 6.3 L8 3.6 L10.8 6.3 M5.2 9.7 L8 12.4 L10.8 9.7" fill="none" stroke="#fff" stroke-width="1.7" stroke-linecap="round" stroke-linejoin="round"/></svg></div></div>
<div class="abs" style="left:257.8px;top:181.3px;width:24.7px;height:11.7px;background:linear-gradient(90deg,#a9b4e0,#e8a8c8 50%,#f5d0a0)"></div>
<div class="lbl" style="left:287px;top:178.09px;font-size:13.6px;line-height:16px;color:#262626;">Accent Color</div>
<div class="lbl" style="right:426px;text-align:right;top:208.59px">Sidebar icon size:</div>
<div class="pop" style="top:206.9px;width:174.2px"><div class="step" style="left:156px"><svg width="16" height="16" viewBox="0 0 16 16"><path d="M5.2 6.3 L8 3.6 L10.8 6.3 M5.2 9.7 L8 12.4 L10.8 9.7" fill="none" stroke="#fff" stroke-width="1.7" stroke-linecap="round" stroke-linejoin="round"/></svg></div></div>
<div class="lbl" style="left:258.4px;top:208.59px;font-size:13.6px;line-height:16px;color:#262626;">Medium</div>
<div class="chk" style="left:250px;top:238.8px"><svg width="14" height="14" viewBox="0 0 14 14"><path d="M3.3 7.2 L6 10.2 L10.8 3.6" fill="none" stroke="#fff" stroke-width="1.9" stroke-linecap="round" stroke-linejoin="round"/></svg></div>
<div class="lbl" style="left:270.9px;top:237.29px;font-size:13.6px;line-height:16px;color:#262626;">Allow wallpaper tinting in windows</div>
<div class="sep" style="top:268px"></div>
<div class="lbl" style="right:426px;text-align:right;top:285.29px">Show scroll bars:</div>
<div class="radio" style="left:252.3px;top:286.7px"></div>
<div class="radio on" style="left:252.3px;top:306.7px"></div>
<div class="radio" style="left:252.3px;top:326.7px"></div>
<div class="lbl" style="left:273px;top:285.29px;font-size:13.6px;line-height:16px;color:#262626;">Automatically based on mouse or trackpad</div>
<div class="lbl" style="left:273px;top:305.29px;font-size:13.6px;line-height:16px;color:#262626;">When scrolling</div>
<div class="lbl" style="left:273px;top:325.29px;font-size:13.6px;line-height:16px;color:#262626;">Always</div>
<div class="lbl" style="right:426px;text-align:right;top:357.99px">Click in the scroll bar to:</div>
<div class="radio on" style="left:252.3px;top:359.3px"></div>
<div class="radio" style="left:252.3px;top:379.3px"></div>
<div class="lbl" style="left:273px;top:357.99px;font-size:13.6px;line-height:16px;color:#262626;">Jump to the next page</div>
<div class="lbl" style="left:273px;top:377.99px;font-size:13.6px;line-height:16px;color:#262626;">Jump to the spot that’s clicked</div>
<div class="sep" style="top:410px"></div>
<div class="lbl" style="right:426px;text-align:right;top:427.29px">Default web browser:</div>
<div class="pop" style="left:249.7px;top:426.3px;width:174.6px"><div class="step" style="left:156.6px"><svg width="16" height="16" viewBox="0 0 16 16"><path d="M5.2 6.3 L8 3.6 L10.8 6.3 M5.2 9.7 L8 12.4 L10.8 9.7" fill="none" stroke="#fff" stroke-width="1.7" stroke-linecap="round" stroke-linejoin="round"/></svg></div></div>
<div class="abs" style="left:259.3px;top:430.2px;width:13.6px;height:13.6px;border-radius:3px;background:linear-gradient(#f4f4f4,#dcdcdc);box-shadow:0 0.5px 1px rgba(0,0,0,.3)"></div><svg class="abs" style="left:259.5px;top:429.5px" width="14" height="14" viewBox="0 0 14 14"><circle cx="7" cy="6.8" r="4.8" fill="#2b8ff5" stroke="#fff" stroke-width="0.6"/><path d="M9.8 4.2 L6.2 6.2 L4.2 9.8 L7.8 7.8 Z" fill="#fff"/><path d="M9.8 4.2 L7.8 7.8 L6.2 6.2 Z" fill="#e33"/></svg>
<div class="lbl" style="left:278.7px;top:427.29px;font-size:13.6px;line-height:16px;color:#262626;">Safari.app</div>
<div class="sep" style="top:461px"></div>
<div class="lbl" style="right:426px;text-align:right;top:478.09px">Prefer tabs:</div>
<div class="pop" style="top:477.2px;width:110.4px"><div class="step" style="left:92px"><svg width="16" height="16" viewBox="0 0 16 16"><path d="M5.2 6.3 L8 3.6 L10.8 6.3 M5.2 9.7 L8 12.4 L10.8 9.7" fill="none" stroke="#fff" stroke-width="1.7" stroke-linecap="round" stroke-linejoin="round"/></svg></div></div>
<div class="lbl" style="left:258.5px;top:478.09px;font-size:13.6px;line-height:16px;color:#262626;">in full screen</div>
<div class="lbl" style="left:368.9px;top:478.09px;font-size:13.6px;line-height:16px;color:#262626;">when opening documents</div>
<div class="unchk" style="left:250.4px;top:507.6px"></div>
<div class="lbl" style="left:270.6px;top:506.69px;font-size:13.6px;line-height:16px;color:#262626;">Ask to keep changes when closing documents</div>
<div class="chk" style="left:250.4px;top:534.2px"><svg width="14" height="14" viewBox="0 0 14 14"><path d="M3.3 7.2 L6 10.2 L10.8 3.6" fill="none" stroke="#fff" stroke-width="1.9" stroke-linecap="round" stroke-linejoin="round"/></svg></div>
<div class="lbl" style="left:270.6px;top:533.29px;font-size:13.6px;line-height:16px;color:#262626;">Close windows when quitting an app</div>
<div class="lbl" style="left:270.6px;top:555.21px;font-size:11.8px;line-height:14px;color:#262626;">When selected, open documents and windows will not be restored</div>
<div class="lbl" style="left:270.6px;top:568.41px;font-size:11.8px;line-height:14px;color:#262626;">when you re-open an app.</div>
<div class="lbl" style="right:426px;text-align:right;top:594.29px">Recent items:</div>
<div class="pop" style="top:593px;width:65.5px"><div class="step" style="left:47px"><svg width="16" height="16" viewBox="0 0 16 16"><path d="M5.2 6.3 L8 3.6 L10.8 6.3 M5.2 9.7 L8 12.4 L10.8 9.7" fill="none" stroke="#fff" stroke-width="1.7" stroke-linecap="round" stroke-linejoin="round"/></svg></div></div>
<div class="lbl" style="left:258.5px;top:594.29px;font-size:13.6px;line-height:16px;color:#262626;">10</div>
<div class="lbl" style="left:323.6px;top:594.29px;font-size:13.6px;line-height:16px;color:#262626;">Documents, Apps, and Servers</div>
<div class="chk" style="left:250.4px;top:624.4px"><svg width="14" height="14" viewBox="0 0 14 14"><path d="M3.3 7.2 L6 10.2 L10.8 3.6" fill="none" stroke="#fff" stroke-width="1.9" stroke-linecap="round" stroke-linejoin="round"/></svg></div>
<div class="lbl" style="left:270.6px;top:623.49px;font-size:13.6px;line-height:16px;color:#262626;">Allow Handoff between this Mac and your iCloud devices</div>
<div class="abs" style="left:628px;top:649px;width:21px;height:21px;border-radius:11px;background:#fff;box-shadow:0 0 0 0.5px rgba(0,0,0,.15),0 0.5px 1.5px rgba(0,0,0,.2);text-align:center;font-size:15.5px;font-weight:bold;line-height:22px;color:#2a2a2a">?</div>

</div>
</body></html>
